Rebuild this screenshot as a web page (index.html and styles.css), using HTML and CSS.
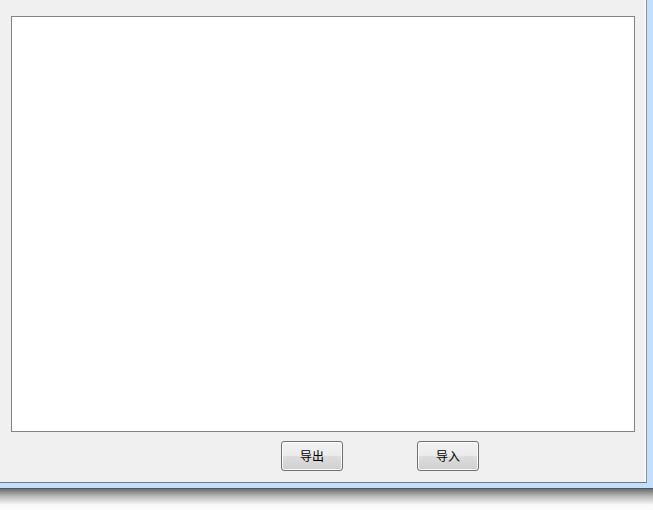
FILE: index.html
```html
<!DOCTYPE html>
<html>
<head>
<meta charset="utf-8">
<link rel="stylesheet" href="styles.css">
</head>
<body>
<div class="frame">
  <div class="client">
    <div class="editor"></div>
    <div class="actions">
      <button class="btn">导出</button>
      <button class="btn">导入</button>
    </div>
  </div>
</div>
<div class="shadow"></div>
</body>
</html>
```
FILE: styles.css
```css
html, body {
  margin: 0;
  padding: 0;
  background: #fafafa;
  font-family: "Noto Sans CJK SC", "Liberation Sans", sans-serif;
}
.frame {
  width: 647px;
  padding-right: 6px;
  padding-bottom: 5px;
  background: #c4dff9;
  border-bottom: 1px solid #4b5866;
}
.client {
  box-sizing: border-box;
  width: 647px;
  height: 483px;
  background: #f0f0f0;
  border-right: 1px solid #8494a4;
  border-bottom: 1px solid #6c7a88;
  box-shadow: inset -2px 0 0 #f7f7f7;
  padding: 16px 0 0 11px;
  display: flex;
  flex-direction: column;
}
.editor {
  box-sizing: border-box;
  width: 624px;
  height: 416px;
  background: #ffffff;
  border: 1px solid #828282;
}
.actions {
  display: flex;
  gap: 74px;
  margin-top: 9px;
  padding-left: 270px;
}
.btn {
  box-sizing: border-box;
  width: 62px;
  height: 30px;
  border: 1px solid #707070;
  border-radius: 3px;
  background: linear-gradient(#f2f2f2 0%, #ebebeb 50%, #dddddd 50%, #cfcfcf 100%);
  box-shadow: inset 0 0 0 1px #fcfcfc;
  font-family: "Noto Sans CJK SC", "Liberation Sans", sans-serif;
  font-size: 12px;
  color: #000;
  padding: 0;
  line-height: 28px;
}
.shadow {
  height: 16px;
  background: linear-gradient(#6e6e6e, #b8b8b8 45%, #fafafa);
}
```
